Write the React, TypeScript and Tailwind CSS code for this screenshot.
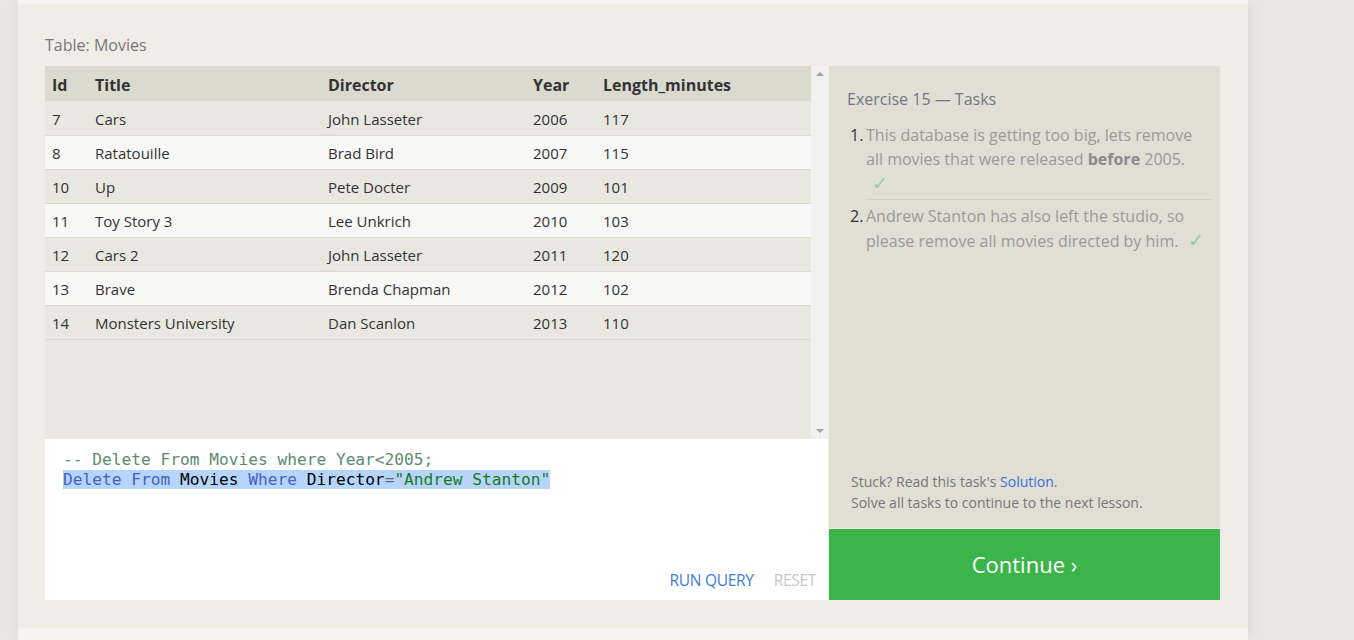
import React from "react";

const movies = [
  { id: 7, title: "Cars", director: "John Lasseter", year: 2006, length: 117 },
  { id: 8, title: "Ratatouille", director: "Brad Bird", year: 2007, length: 115 },
  { id: 10, title: "Up", director: "Pete Docter", year: 2009, length: 101 },
  { id: 11, title: "Toy Story 3", director: "Lee Unkrich", year: 2010, length: 103 },
  { id: 12, title: "Cars 2", director: "John Lasseter", year: 2011, length: 120 },
  { id: 13, title: "Brave", director: "Brenda Chapman", year: 2012, length: 102 },
  { id: 14, title: "Monsters University", director: "Dan Scanlon", year: 2013, length: 110 },
];

function MoviesTable() {
  return (
    <div className="flex h-[373px] bg-[#e9e8e0]">
      <div className="flex-1">
        <table className="w-full table-fixed border-collapse text-[15px] text-[#333]">
          <colgroup>
            <col className="w-[43px]" />
            <col className="w-[233px]" />
            <col className="w-[205px]" />
            <col className="w-[70px]" />
            <col />
          </colgroup>
          <thead>
            <tr className="h-[35px] bg-[#dbdacf] text-left text-[16px] font-bold">
              <th className="pl-[7px] pt-[2px]">Id</th>
              <th className="pl-[7px] pt-[2px]">Title</th>
              <th className="pl-[7px] pt-[2px]">Director</th>
              <th className="pl-[7px] pt-[2px]">Year</th>
              <th className="pl-[7px] pt-[2px]">Length_minutes</th>
            </tr>
          </thead>
          <tbody>
            {movies.map((m, i) => (
              <tr
                key={m.id}
                className={`h-[34px] border-b border-[#dcdbd3] ${i % 2 === 0 ? "bg-[#e9e8e0]" : "bg-[#f8f8f7]"}`}
              >
                <td className="pl-[7px] pt-[2px]">{m.id}</td>
                <td className="pl-[7px] pt-[2px]">{m.title}</td>
                <td className="pl-[7px] pt-[2px]">{m.director}</td>
                <td className="pl-[7px] pt-[2px]">{m.year}</td>
                <td className="pl-[7px] pt-[2px]">{m.length}</td>
              </tr>
            ))}
          </tbody>
        </table>
      </div>
      {/* scrollbar */}
      <div className="flex w-[17px] flex-col items-center justify-between bg-[#f1f1f1] py-[6px]">
        <div className="h-0 w-0 border-x-[4px] border-b-[4px] border-x-transparent border-b-[#a3a3a3]" />
        <div className="h-0 w-0 border-x-[4px] border-t-[4px] border-x-transparent border-t-[#a3a3a3]" />
      </div>
    </div>
  );
}

function Editor() {
  return (
    <div className="flex h-[161px] flex-col justify-between bg-white pl-[18px] pr-[12px] pt-[11px] pb-[8px]">
      <pre className="font-['DejaVu_Sans_Mono',monospace] text-[16.2px] leading-[20px]">
        <div className="text-[#5a8c72]">-- Delete From Movies where Year&lt;2005;</div>
        <span className="bg-[#b5d5fc]">
          <span className="text-[#4b60c4]">Delete From</span>
          <span className="text-black"> Movies </span>
          <span className="text-[#4b60c4]">Where</span>
          <span className="text-black"> Director</span>
          <span className="text-[#666]">=</span>
          <span className="text-[#1a7a1a]">"Andrew Stanton"</span>
        </span>
      </pre>
      <div className="flex justify-end gap-5 text-[15.5px]">
        <button className="uppercase tracking-[-0.3px] text-[#3b7ddd]">Run Query</button>
        <button className="uppercase tracking-[-0.3px] text-[#c8c8c8]">Reset</button>
      </div>
    </div>
  );
}

function Tasks() {
  return (
    <div className="flex w-[391px] flex-col">
      <div className="flex flex-1 flex-col justify-between bg-[#e1dfd4] pl-[18px] pr-[8px] pt-[22px] pb-[15px]">
        <div>
          <h3 className="text-[16px] leading-[22px] text-[#727781]">Exercise 15 — Tasks</h3>
          <ol className="mt-[13px] text-[16px] leading-[24px] text-[#9a9a96]">
            <li className="flex">
              <span className="w-[19px] shrink-0 pl-[3px] text-[#333]">1.</span>
              <div className="flex-1 border-b border-[#d3d1c6] pb-[4px]">
                This database is getting too big, lets remove all movies that were released{" "}
                <b className="font-bold text-[#8a8a86]">before</b> 2005.
                <div className="pl-[6px] text-[19px] text-[#8fd19e]">✓</div>
              </div>
            </li>
            <li className="flex pt-[4px]">
              <span className="w-[19px] shrink-0 pl-[3px] text-[#333]">2.</span>
              <div className="flex-1">
                Andrew Stanton has also left the studio, so please remove all movies directed by him.
                <span className="ml-[10px] text-[19px] text-[#8fd19e]">✓</span>
              </div>
            </li>
          </ol>
        </div>
        <div className="pl-[4px] text-[14px] leading-[21px] text-[#777]">
          <p>
            Stuck? Read this task's <a className="text-[#3b6fe0]">Solution</a>.
          </p>
          <p>Solve all tasks to continue to the next lesson.</p>
        </div>
      </div>
      <button className="mt-px h-[71px] bg-[#3bb54a] text-[22px] text-white">Continue ›</button>
    </div>
  );
}

export default function App() {
  return (
    <div className="min-h-[640px] bg-[#ebe6e3] font-['Open_Sans',sans-serif]">
      <div className="ml-[18px] w-[1230px] bg-[#f5f4f0] pt-[4px] pb-[12px] shadow-[0_0_14px_rgba(0,0,0,0.07)]">
        <div className="rounded-[4px] bg-[#efede6] px-[27px] pb-[28px] pr-[28px]">
          <div className="flex h-[62px] items-end pb-[9px] text-[16px] text-[#777]">Table: Movies</div>
          <div className="flex gap-px">
            <div className="flex flex-1 flex-col">
              <MoviesTable />
              <Editor />
            </div>
            <Tasks />
          </div>
        </div>
      </div>
    </div>
  );
}
